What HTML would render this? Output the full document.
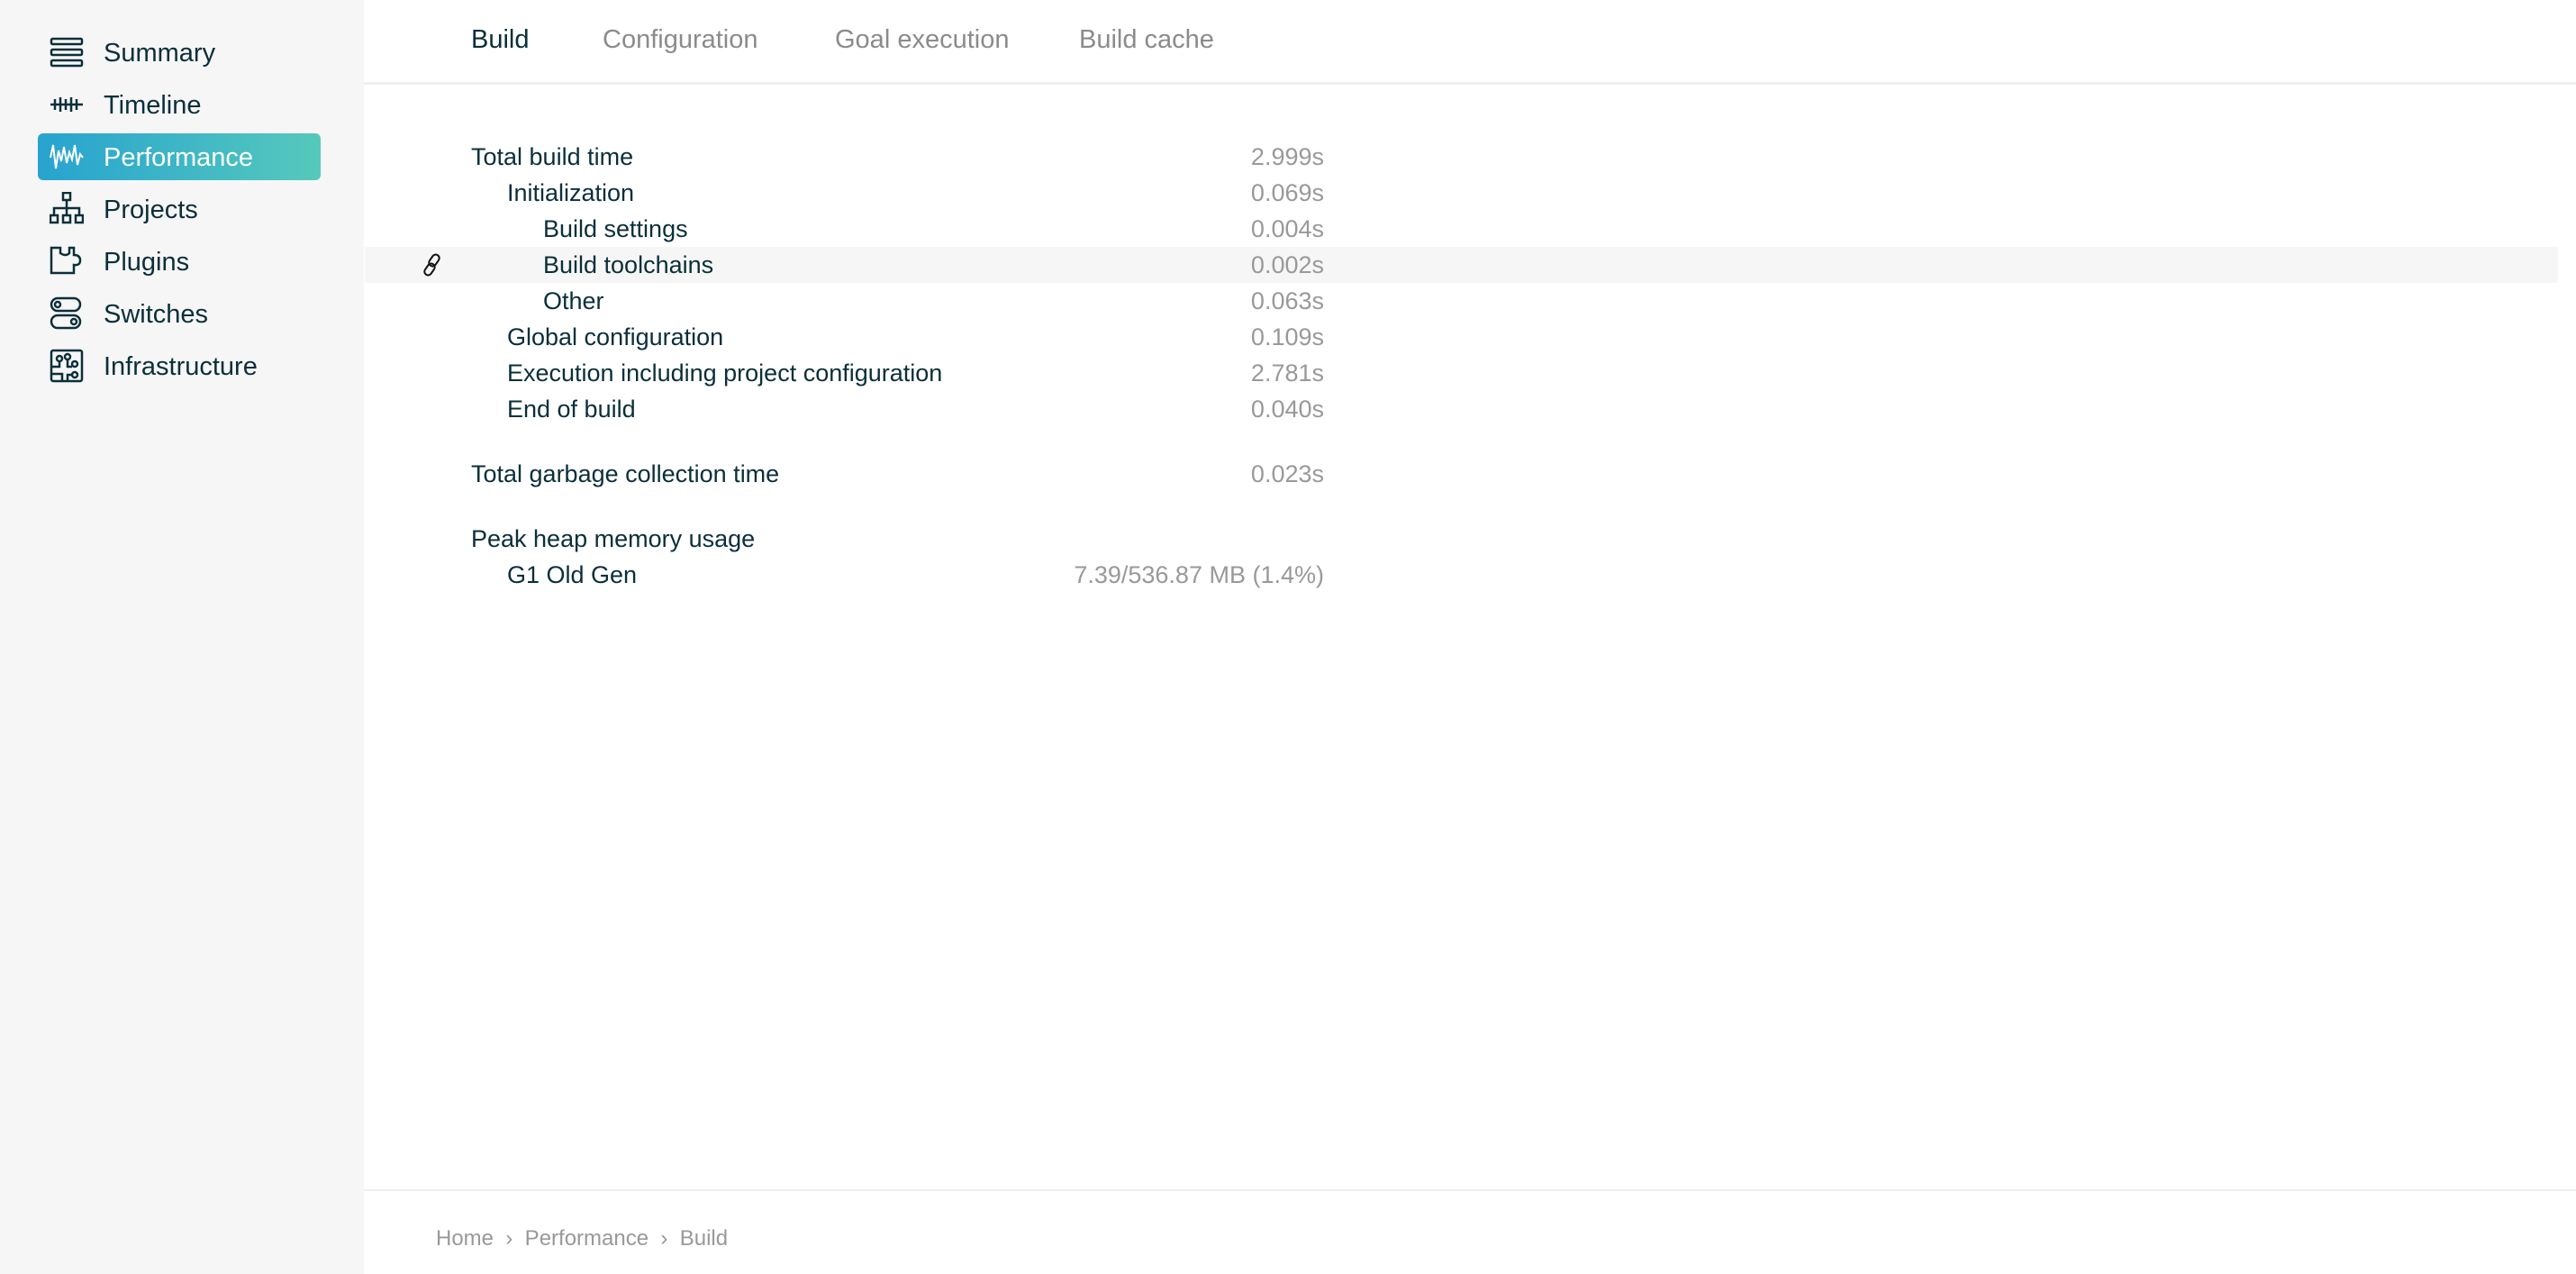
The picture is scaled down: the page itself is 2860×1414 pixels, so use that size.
<!DOCTYPE html>
<html><head><meta charset="utf-8"><style>
*{margin:0;padding:0;box-sizing:border-box}
body{width:2860px;height:1414px;background:#fff;font-family:"Liberation Sans",sans-serif;color:#0b2f3a;position:relative;overflow:hidden}
.sb{position:absolute;left:0;top:0;width:404px;height:1414px;background:#f6f6f6}
.item{position:absolute;left:42px;width:314px;height:52px;font-size:29px;line-height:54px;padding-left:73px}
.item svg{position:absolute;left:13px;top:7px}
.act{background:linear-gradient(90deg,#27a3cf,#56c9bc);color:#fff;border-radius:6px}
.tab{position:absolute;top:28px;font-size:29px;color:#8b8b8b}
.t{position:absolute;font-size:27px;line-height:40px}
.v{position:absolute;right:1390px;font-size:27px;line-height:40px;color:#999}
</style></head><body>
<div class="sb">
<div class="item" style="top:32px"><svg width="38" height="38" viewBox="0 0 38 38" fill="none" stroke="#0b2f3a" stroke-width="2.5"><rect x="2" y="4" width="34" height="6" rx="1.5"/><rect x="2" y="16" width="34" height="6" rx="1.5"/><rect x="2" y="28" width="34" height="6" rx="1.5"/></svg>Summary</div>
<div class="item" style="top:90px"><svg width="38" height="38" viewBox="0 0 38 38" fill="none" stroke="#0b2f3a" stroke-width="2.5"><path d="M1 19H37M6 13V25M12 11V27M18 13V25M24 11V27M30 13V25"/></svg>Timeline</div>
<div class="item act" style="top:148px"><svg width="38" height="38" viewBox="0 0 38 38" fill="none" stroke="#fff" stroke-width="2"><path d="M1 20L4 6L7 32L10 12L13 24L16 8L19 26L22 14L25 22L28 6L31 28L34 16L37 20"/></svg>Performance</div>
<div class="item" style="top:206px"><svg width="38" height="38" viewBox="0 0 38 38" fill="none" stroke="#0b2f3a" stroke-width="2.5"><rect x="15" y="1" width="8" height="8"/><path d="M19 9V18M5 26V18H33V26M19 18V26"/><rect x="1" y="26" width="8" height="8"/><rect x="15" y="26" width="8" height="8"/><rect x="29" y="26" width="8" height="8"/></svg>Projects</div>
<div class="item" style="top:264px"><svg width="38" height="38" viewBox="0 0 38 38" fill="none" stroke="#0b2f3a" stroke-width="2.5"><path d="M2 4H12V10Q18 14 22 10V4H27V12Q34 12 34 18Q34 24 27 23V32H2Z"/></svg>Plugins</div>
<div class="item" style="top:322px"><svg width="38" height="38" viewBox="0 0 38 38" fill="none" stroke="#0b2f3a" stroke-width="2.5"><rect x="2" y="2" width="32" height="14" rx="7"/><circle cx="9" cy="9" r="3"/><rect x="2" y="21" width="32" height="14" rx="7"/><circle cx="27" cy="28" r="3"/></svg>Switches</div>
<div class="item" style="top:380px"><svg width="38" height="38" viewBox="0 0 38 38" fill="none" stroke="#0b2f3a" stroke-width="2.5"><rect x="2" y="2" width="34" height="34" rx="2"/><circle cx="11" cy="11" r="3"/><circle cx="20" cy="9" r="3"/><circle cx="28" cy="17" r="3"/><circle cx="28" cy="29" r="3"/><path d="M11 14V20H2M20 12V20H25M2 28H14V36M25 29H20V36"/></svg>Infrastructure</div>
</div>
<div style="position:absolute;left:404px;top:91px;width:2456px;height:3px;background:#f0f0f0"></div>
<div class="tab" style="left:523px;color:#0b2f3a">Build</div>
<div class="tab" style="left:669px">Configuration</div>
<div class="tab" style="left:927px">Goal execution</div>
<div class="tab" style="left:1198px">Build cache</div>
<div style="position:absolute;left:405px;top:274px;width:2435px;height:40px;background:#f6f6f6"></div>
<svg style="position:absolute;left:466px;top:280px" width="28" height="28" viewBox="0 0 28 28" fill="none" stroke="#111" stroke-width="2"><rect x="12" y="2" width="8" height="14" rx="4" transform="rotate(35 16 9)"/><rect x="7" y="12" width="8" height="14" rx="4" transform="rotate(35 11 19)"/></svg>
<div class="t" style="left:523px;top:154px">Total build time</div><div class="v" style="top:154px">2.999s</div>
<div class="t" style="left:563px;top:194px">Initialization</div><div class="v" style="top:194px">0.069s</div>
<div class="t" style="left:603px;top:234px">Build settings</div><div class="v" style="top:234px">0.004s</div>
<div class="t" style="left:603px;top:274px">Build toolchains</div><div class="v" style="top:274px">0.002s</div>
<div class="t" style="left:603px;top:314px">Other</div><div class="v" style="top:314px">0.063s</div>
<div class="t" style="left:563px;top:354px">Global configuration</div><div class="v" style="top:354px">0.109s</div>
<div class="t" style="left:563px;top:394px">Execution including project configuration</div><div class="v" style="top:394px">2.781s</div>
<div class="t" style="left:563px;top:434px">End of build</div><div class="v" style="top:434px">0.040s</div>
<div class="t" style="left:523px;top:506px">Total garbage collection time</div><div class="v" style="top:506px">0.023s</div>
<div class="t" style="left:523px;top:578px">Peak heap memory usage</div>
<div class="t" style="left:563px;top:618px">G1 Old Gen</div><div class="v" style="top:618px">7.39/536.87 MB (1.4%)</div>
<div style="position:absolute;left:404px;top:1320px;width:2456px;height:2px;background:#efefef"></div>
<div style="position:absolute;left:484px;top:1361px;font-size:24px;color:#999">Home &nbsp;›&nbsp; Performance &nbsp;›&nbsp; Build</div>
</body></html>
